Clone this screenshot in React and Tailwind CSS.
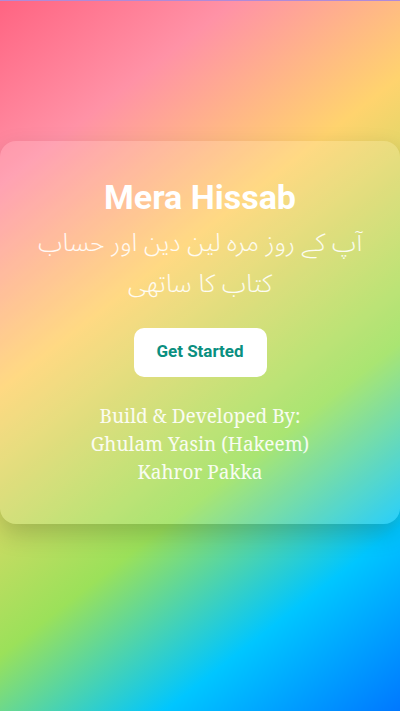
export default function App() {
  return (
    <div
      className="min-h-[711px] w-full flex items-center justify-center border-t border-[#b08ad8] pb-[48px]"
      style={{
        background:
          "linear-gradient(142deg, #ff6482 0%, #ff92a6 18%, #ffd36e 38%, #9be15a 64%, #00c6ff 82%, #0078ff 100%)",
      }}
    >
      <div className="w-full rounded-2xl bg-white/15 shadow-[0_10px_24px_rgba(0,0,0,0.18)] px-6 pt-[34px] pb-[38px] flex flex-col items-center text-center">
        <h1 className="font-['Roboto',sans-serif] font-bold text-[34px] leading-[44px] text-white">
          Mera Hissab
        </h1>
        <p
          dir="rtl"
          className="mt-[4px] font-['Noto_Sans_Arabic','Noto_Naskh_Arabic','DejaVu_Sans',sans-serif] font-light text-[25px] leading-[41px] text-white/90"
        >
          آپ کے روز مرہ لین دین اور حساب کتاب کا ساتھی
        </p>
        <button className="mt-[23px] bg-white rounded-[10px] w-[133px] h-[49px] font-['Roboto',sans-serif] font-bold text-[17px] text-[#0a8f80]">
          Get Started
        </button>
        <div className="mt-[25px] font-['Noto_Serif','DejaVu_Serif',serif] text-[19px] leading-[28px] text-white/90">
          <p>Build &amp; Developed By:</p>
          <p>Ghulam Yasin (Hakeem)</p>
          <p>Kahror Pakka</p>
        </div>
      </div>
    </div>
  );
}
